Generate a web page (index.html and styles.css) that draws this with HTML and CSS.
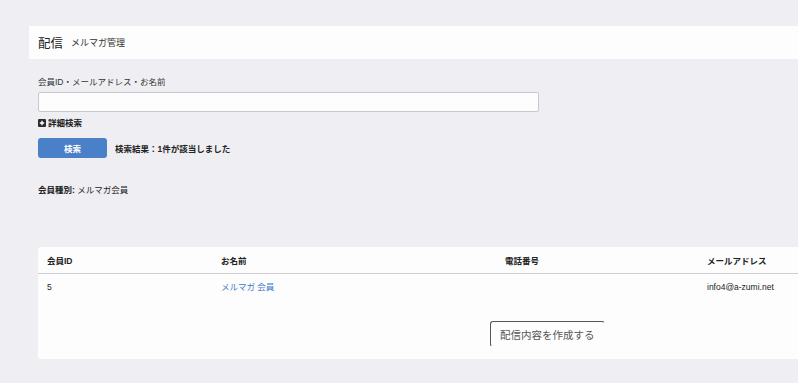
FILE: index.html
```html
<!DOCTYPE html>
<html lang="ja">

<head>
    <meta charset="UTF-8">
    <meta name="viewport" content="width=device-width, initial-scale=1.0">
    <title>メルマガ管理</title>
    <link rel="stylesheet" href="styles.css">
</head>

<body>
    <div class="page-header">
        <h1>配信</h1>
        <span class="sub-title">メルマガ管理</span>
    </div>

    <div class="content">
        <form class="search-form" onsubmit="return false;">
            <label for="keyword">会員ID・メールアドレス・お名前</label>
            <input type="text" id="keyword">
            <div class="detail-toggle">
                <span class="plus-icon">
                    <svg width="8" height="8" viewBox="0 0 8 8">
                        <rect x="0" y="0" width="8" height="8" rx="1" fill="#2b2b2b"/>
                        <path d="M4 1.8V6.2M1.8 4H6.2" stroke="#fff" stroke-width="1.4"/>
                    </svg>
                </span>
                詳細検索
            </div>
            <div class="search-row">
                <button type="submit" class="btn-search">検索</button>
                <span class="result-count">検索結果：1件が該当しました</span>
            </div>
        </form>

        <p class="member-type"><strong>会員種別:</strong> メルマガ会員</p>

        <div class="card">
            <table class="member-table">
                <thead>
                    <tr>
                        <th class="col-id">会員ID</th>
                        <th class="col-name">お名前</th>
                        <th class="col-tel">電話番号</th>
                        <th class="col-mail">メールアドレス</th>
                    </tr>
                </thead>
                <tbody>
                    <tr>
                        <td>5</td>
                        <td><a href="#">メルマガ 会員</a></td>
                        <td></td>
                        <td>info4@a-zumi.net</td>
                    </tr>
                </tbody>
            </table>
            <div class="card-footer">
                <button class="btn-create">配信内容を作成する</button>
            </div>
        </div>
    </div>
</body>

</html>
```

FILE: styles.css
```css
body {
    margin: 0;
    padding: 26px 0 0 0;
    background-color: #efeff3;
    font-family: "Liberation Sans", "Noto Sans CJK JP", sans-serif;
    color: #222;
}

.page-header {
    display: flex;
    align-items: center;
    margin-left: 29px;
    height: 33px;
    padding-left: 9px;
    background-color: #fcfdfc;
}

.page-header h1 {
    margin: 0;
    font-size: 12.5px;
    font-weight: 400;
    color: #222;
}

.sub-title {
    margin-left: 8px;
    font-size: 9px;
    color: #333;
}

.content {
    padding-left: 38px;
}

.search-form label {
    display: block;
    margin-top: 17px;
    font-size: 8.5px;
    line-height: 12px;
    color: #333;
}

.search-form input {
    display: block;
    box-sizing: border-box;
    width: 501px;
    height: 20px;
    margin-top: 4px;
    border: 1px solid #c8c8cc;
    border-radius: 2px;
    background-color: #fcfdfc;
}

.detail-toggle {
    display: flex;
    align-items: center;
    margin-top: 5px;
    font-size: 8.5px;
    font-weight: 700;
    line-height: 12px;
}

.plus-icon {
    display: flex;
    margin-right: 2px;
}

.search-row {
    display: flex;
    align-items: center;
    margin-top: 9px;
}

.btn-search {
    width: 69px;
    height: 20px;
    padding: 0;
    border: none;
    border-radius: 3px;
    background-color: #4a80c8;
    color: #fff;
    font-family: inherit;
    font-size: 8.5px;
    font-weight: 700;
    cursor: pointer;
}

.result-count {
    margin-left: 8px;
    font-size: 8.5px;
    font-weight: 700;
}

.member-type {
    margin: 26px 0 0 0;
    font-size: 8.5px;
    line-height: 12px;
}

.card {
    margin-top: 51px;
    padding-bottom: 12px;
    background-color: #fcfdfc;
    border-radius: 3px 0 0 3px;
}

.member-table {
    width: 100%;
    border-collapse: collapse;
    font-size: 8.5px;
    text-align: left;
}

.member-table th {
    height: 26px;
    padding: 0 9px;
    font-weight: 700;
    border-bottom: 1px solid #cfcfd2;
    vertical-align: middle;
}

.member-table td {
    padding: 7px 9px 0 9px;
    line-height: 12px;
    white-space: nowrap;
}

.col-id {
    width: 156px;
}

.col-name {
    width: 266px;
}

.col-tel {
    width: 184px;
}

.member-table a {
    color: #3b78cc;
    text-decoration: none;
}

.card-footer {
    display: flex;
    margin-top: 28px;
    padding-left: 452px;
}

.btn-create {
    height: 26px;
    padding: 0 9px;
    border: 1px solid #555;
    border-right-color: transparent;
    border-bottom-color: transparent;
    border-radius: 3px;
    background-color: #fcfdfc;
    color: #555;
    font-family: inherit;
    font-size: 10.5px;
    cursor: pointer;
}
```
